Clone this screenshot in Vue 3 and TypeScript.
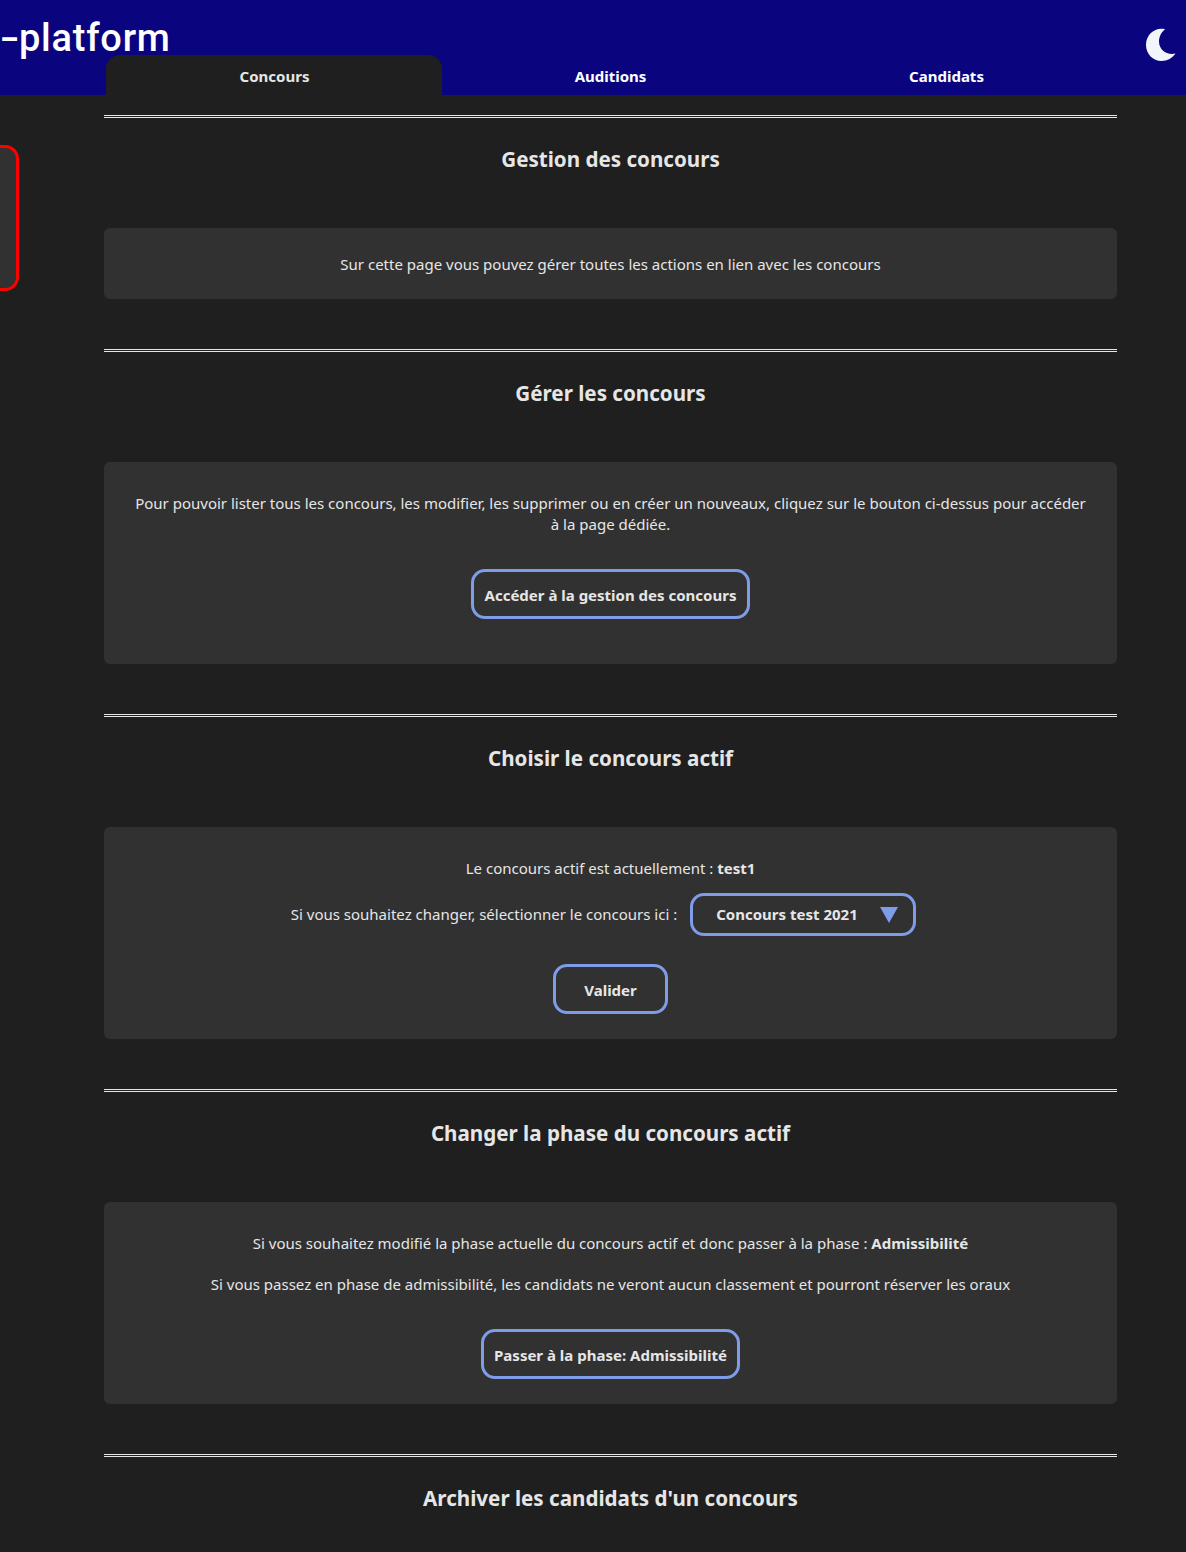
<script setup lang="ts">
import { ref } from 'vue'

const tabs = ['Concours', 'Auditions', 'Candidats']
const activeTab = ref('Concours')
const selected = ref('Concours test 2021')
</script>

<template>
  <div class="page">
    <header class="header">
      <div class="logo"><span class="dash">-</span>platform</div>
      <svg class="moon" viewBox="0 0 32 34" width="32" height="34">
        <path d="M20 1.2 C10 -1 1 6.5 1 17 C1 26 8 33 16.500 33 C22.500 33 27.500 30 30.500 25.500 C22 27.500 14 22 14 13.500 C14 8.500 16.500 4 20 1.200 Z" fill="#f2f5fb" />
      </svg>
      <nav class="tabs">
        <a
          v-for="tab in tabs"
          :key="tab"
          class="tab"
          :class="{ active: tab === activeTab }"
          @click="activeTab = tab"
        >{{ tab }}</a>
      </nav>
    </header>

    <aside class="side-panel"></aside>

    <main class="content">
      <section class="section">
        <hr />
        <h2>Gestion des concours</h2>
        <div class="card card-intro">
          <p>Sur cette page vous pouvez gérer toutes les actions en lien avec les concours</p>
        </div>
      </section>

      <section class="section">
        <hr />
        <h2>Gérer les concours</h2>
        <div class="card">
          <p class="long">Pour pouvoir lister tous les concours, les modifier, les supprimer ou en créer un nouveaux, cliquez sur le bouton ci-dessus pour accéder à la page dédiée.</p>
          <button class="btn btn-manage" type="button">Accéder à la gestion des concours</button>
        </div>
      </section>

      <section class="section">
        <hr />
        <h2>Choisir le concours actif</h2>
        <div class="card card-active">
          <p>Le concours actif est actuellement : <b>test1</b></p>
          <div class="select-row">
            <span>Si vous souhaitez changer, sélectionner le concours ici :</span>
            <div class="select">
              <span>{{ selected }}</span>
              <i class="arrow"></i>
            </div>
          </div>
          <button class="btn btn-validate" type="button">Valider</button>
        </div>
      </section>

      <section class="section">
        <hr />
        <h2>Changer la phase du concours actif</h2>
        <div class="card card-phase">
          <p>Si vous souhaitez modifié la phase actuelle du concours actif et donc passer à la phase : <b>Admissibilité</b></p>
          <p class="second">Si vous passez en phase de admissibilité, les candidats ne veront aucun classement et pourront réserver les oraux</p>
          <button class="btn btn-phase" type="button">Passer à la phase: Admissibilité</button>
        </div>
      </section>

      <section class="section">
        <hr />
        <h2>Archiver les candidats d'un concours</h2>
      </section>
    </main>
  </div>
</template>

<style>
html,
body {
  margin: 0;
  background: #1f1f1f;
}
</style>

<style scoped>
.page {
  position: relative;
  height: 1552px;
  overflow: hidden;
  background: #1f1f1f;
  color: #e6e6e6;
  font-family: "Noto Sans", "Open Sans", sans-serif;
  font-size: 15px;
  line-height: 21px;
}

.header {
  position: relative;
  height: 95px;
  background: #0a057f;
}

.logo {
  height: 55px;
  font-family: Roboto, "Noto Sans", sans-serif;
  font-size: 38px;
  font-weight: 500;
  letter-spacing: 0.75px;
  line-height: 77px;
  color: #fff;
  white-space: nowrap;
}

.dash {
  display: inline-block;
  width: 19px;
  transform: scaleX(1.5);
  transform-origin: left;
}

.moon {
  position: absolute;
  left: 1145px;
  top: 28px;
}

.tabs {
  display: flex;
  margin-left: 106px;
  width: 1008px;
}

.tab {
  flex: 1;
  height: 40px;
  line-height: 42px;
  text-align: center;
  text-indent: 1px;
  font-size: 15px;
  font-weight: 700;
  color: #fff;
  border-radius: 14px 14px 0 0;
  cursor: pointer;
}

.tab.active {
  background: #1f1f1f;
  color: #e6e6e6;
}

.side-panel {
  position: absolute;
  left: -20px;
  top: 145px;
  width: 33px;
  height: 140px;
  background: #313131;
  border: 3px solid #f00;
  border-radius: 14px;
}

.content {
  width: 1013px;
  margin-left: 104px;
  padding-top: 20px;
}

.section {
  margin-bottom: 50px;
}

hr {
  height: 0;
  margin: 0;
  border: none;
  border-top: 3px double #e6e6e6;
}

h2 {
  height: 110px;
  margin: 0;
  padding-top: 27px;
  box-sizing: border-box;
  text-align: center;
  font-size: 20.6px;
  line-height: 28px;
  font-weight: 700;
  color: #e6e6e6;
}

.card {
  display: flex;
  flex-direction: column;
  align-items: center;
  padding: 31px 30px 45px;
  background: #313131;
  border-radius: 6px;
  text-align: center;
}

p {
  margin: 0;
}

.long {
  width: 960px;
}

.card-intro {
  height: 71px;
  padding: 26px 30px 0;
  box-sizing: border-box;
}

.card-active {
  padding: 31px 30px 25px;
}

.card-phase {
  padding: 31px 30px 25px;
}

.second {
  margin-top: 20px;
}

.btn {
  display: block;
  height: 50px;
  padding: 2px 0 0;
  box-sizing: border-box;
  background: transparent;
  border: 3px solid #7f9ce8;
  border-radius: 14px;
  color: #e6e6e6;
  font-family: inherit;
  font-size: 15px;
  font-weight: 700;
  cursor: pointer;
}

.btn-manage {
  width: 279px;
  margin-top: 34px;
}

.btn-validate {
  width: 115px;
  margin-top: 28px;
}

.btn-phase {
  width: 259px;
  margin-top: 34px;
}

.select-row {
  display: flex;
  align-items: center;
  gap: 13px;
  margin-top: 14px;
  padding-right: 14px;
}

.select {
  display: flex;
  align-items: center;
  justify-content: space-between;
  width: 226px;
  height: 43px;
  padding: 0 15px 0 23px;
  box-sizing: border-box;
  border: 3px solid #7f9ce8;
  border-radius: 14px;
  font-weight: 700;
}

.arrow {
  width: 0;
  height: 0;
  border-left: 9px solid transparent;
  border-right: 9px solid transparent;
  border-top: 16px solid #7f9ce8;
}
</style>
